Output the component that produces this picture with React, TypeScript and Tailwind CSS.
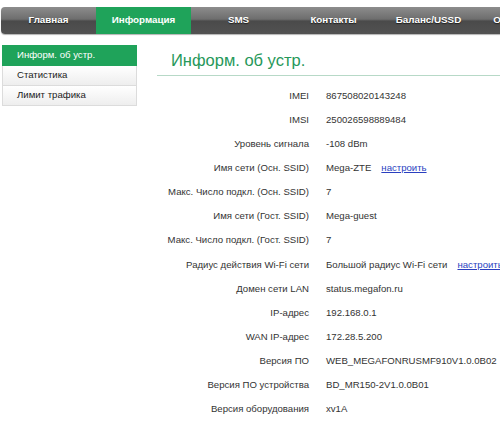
import React from "react";

const tabs = ["Главная", "Информация", "SMS", "Контакты", "Баланс/USSD", "Обновление"];

const rows: { label: string; value: string; link?: boolean }[] = [
  { label: "IMEI", value: "867508020143248" },
  { label: "IMSI", value: "250026598889484" },
  { label: "Уровень сигнала", value: "-108 dBm" },
  { label: "Имя сети (Осн. SSID)", value: "Mega-ZTE", link: true },
  { label: "Макс. Число подкл. (Осн. SSID)", value: "7" },
  { label: "Имя сети (Гост. SSID)", value: "Mega-guest" },
  { label: "Макс. Число подкл. (Гост. SSID)", value: "7" },
  { label: "Радиус действия Wi-Fi сети", value: "Большой радиус Wi-Fi сети", link: true },
  { label: "Домен сети LAN", value: "status.megafon.ru" },
  { label: "IP-адрес", value: "192.168.0.1" },
  { label: "WAN IP-адрес", value: "172.28.5.200" },
  { label: "Версия ПО", value: "WEB_MEGAFONRUSMF910V1.0.0B02" },
  { label: "Версия ПО устройства", value: "BD_MR150-2V1.0.0B01" },
  { label: "Версия оборудования", value: "xv1A" },
];

export default function App() {
  return (
    <div
      className="w-[500px] h-[421px] bg-white overflow-hidden text-[#333]"
      style={{ fontFamily: '"Liberation Sans", Arial, sans-serif' }}
    >
      <div className="pt-[7px] pl-[1px]">
        <div className="flex w-[620px] h-[27px] rounded-l-[4px] overflow-hidden bg-[linear-gradient(to_bottom,#8c8c8c_0%,#6e6e6e_45%,#4a4a4a_52%,#525252_100%)] shadow-[0_1px_1px_rgba(0,0,0,0.3)]">
          {tabs.map((t, i) => (
            <div
              key={t}
              className={
                "w-[95px] shrink-0 flex items-center justify-center text-[9.8px] font-bold text-white whitespace-nowrap " +
                (i === 1 ? "bg-[#1fa35a]" : "[text-shadow:0_1px_1px_rgba(0,0,0,0.6)]")
              }
            >
              {t}
            </div>
          ))}
        </div>
      </div>

      <div className="flex">
        <div className="ml-[2px] mt-[11px] w-[135px] shrink-0 text-[9.6px]">
          <div className="h-[21px] bg-[#1fa35a] text-white flex items-center pl-[14px] border border-[#1fa35a]">
            Информ. об устр.
          </div>
          <div className="h-[20px] flex items-center pl-[14px] text-[#222] border-x border-b border-[#dcdcdc] bg-[linear-gradient(to_bottom,#ffffff,#eeeeee)]">
            Статистика
          </div>
          <div className="h-[20px] flex items-center pl-[14px] text-[#222] border-x border-b border-[#dcdcdc] bg-[linear-gradient(to_bottom,#ffffff,#eeeeee)]">
            Лимит трафика
          </div>
        </div>

        <div className="ml-[20px] flex-1 min-w-0">
          <div className="mt-[11px] h-[31px] border-b border-[#b7d9c7] flex items-center pl-[14px] text-[16.5px] text-[#26985a] whitespace-nowrap">
            Информ. об устр.
          </div>
          <div className="pt-[8px] text-[9.6px]">
            {rows.map((r) => (
              <div key={r.label} className="h-[24.1px] flex items-center whitespace-nowrap">
                <div className="w-[152px] shrink-0 text-right">{r.label}</div>
                <div className="pl-[17px] flex items-center">
                  <span>{r.value}</span>
                  {r.link && (
                    <span className="ml-[10px] text-[#2a3fbf] underline">настроить</span>
                  )}
                </div>
              </div>
            ))}
          </div>
        </div>
      </div>
    </div>
  );
}
